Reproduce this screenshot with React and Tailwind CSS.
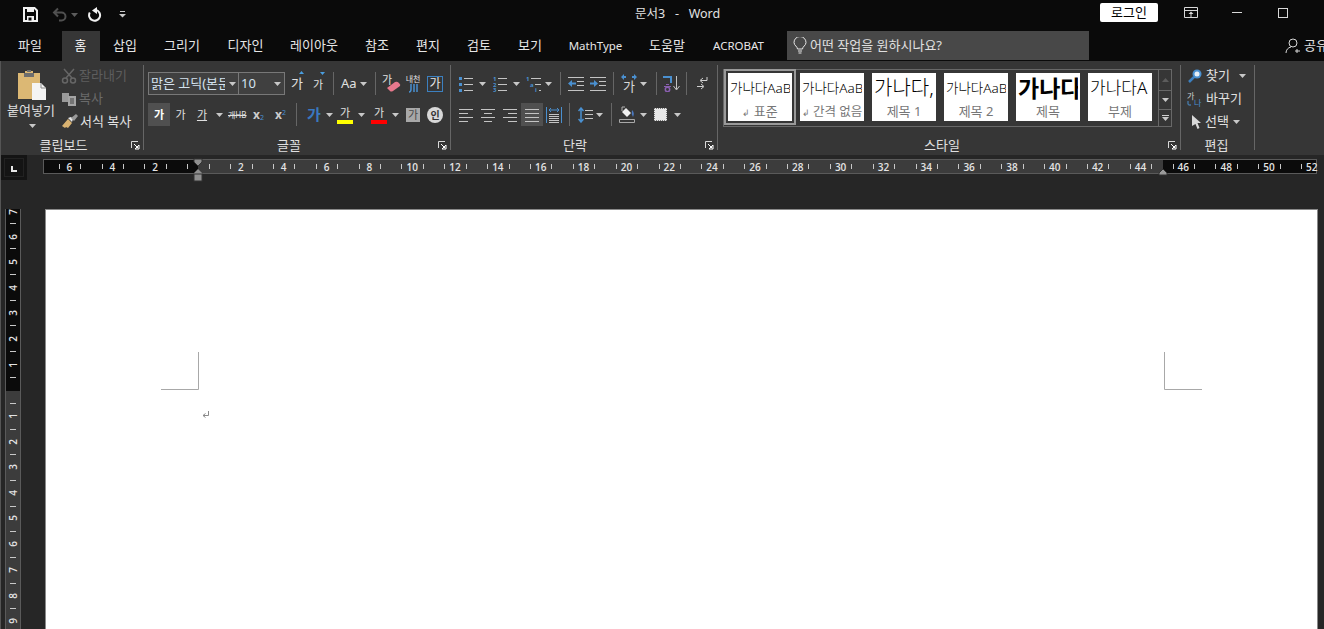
const Caret = ({ className = "", dim }) => (
  <svg width="7" height="4" viewBox="0 0 7 4" className={`shrink-0 ${className}`}>
    <path d="M0 0h7L3.5 4z" fill={dim ? "#5c5c5c" : "#c8c8c8"} />
  </svg>
);

const Sep = ({ className = "" }) => <div className={`w-px h-[23px] bg-[#666666] shrink-0 ${className}`} />;

const Launcher = () => (
  <svg width="9" height="9" viewBox="0 0 9 9" className="absolute right-[3px] bottom-[5px]">
    <path d="M0.5 7V0.5H7" fill="none" stroke="#d8d8d8" />
    <path d="M3 3l4 4M4 8h4V4z" fill="none" stroke="#ffffff" />
  </svg>
);

const Ga = ({ className = "" }) => <span className={`leading-none ${className}`}>가</span>;

const Lines = ({ rows, w = 14 }) => (
  <svg width={w} height="16" viewBox={`0 0 ${w} 16`} className="shrink-0">
    {rows.map((r, i) => (
      <path key={i} d={`M${r[0]} ${r[1]}.5H${r[2]}`} stroke="#c4c4c4" />
    ))}
  </svg>
);

const Tab = ({ children, className = "" }) => (
  <div className={`h-[30px] flex items-center justify-center text-[#e6e6e6] shrink-0 whitespace-nowrap ${className}`}>{children}</div>
);

const StyleCard = ({ preview, caption, className = "" }) => (
  <div className={`w-[64px] h-[48px] bg-white shrink-0 flex flex-col items-center ${className}`}>
    <div className="h-[30px] w-full px-[2px]">
      <div className="h-full w-full flex items-center overflow-hidden whitespace-nowrap text-black font-light">{preview}</div>
    </div>
    <div className="h-[18px] leading-[16px] text-[#777777] whitespace-nowrap">{caption}</div>
  </div>
);

function HRuler() {
  const nums = [];
  for (let n = -6; n <= 52; n += 2) {
    if (n !== 0) nums.push(n);
  }
  const ticks = [];
  for (let k = -7; k < 52; k++) ticks.push(155 + 21.42 * (k + 0.5));
  return (
    <svg width="1274" height="26" viewBox="0 0 1274 26" className="overflow-visible shrink-0">
      <rect x="0.5" y="0.5" width="1273" height="14" fill="#0b0b0b" stroke="#5a5a5a" />
      <rect x="155" y="1" width="965" height="13" fill="#3c3c3c" />
      {ticks.map((x, i) => (
        <path key={i} d={`M${Math.round(x)}.5 5v5`} stroke="#c8c8c8" />
      ))}
      {nums.map((n) => (
        <text key={n} x={155 + 21.42 * n} y="11.5" fontSize="10" fontWeight="600" fill="#e4e4e4" textAnchor="middle" fontFamily="'Open Sans', sans-serif">
          {Math.abs(n)}
        </text>
      ))}
      <path d="M151 0h8v3l-4 4-4-4z" fill="#8f8f8f" stroke="#333333" />
      <path d="M155 10l4 4v1h-8v-1z" fill="#8f8f8f" />
      <rect x="151" y="15" width="8" height="7" fill="#8f8f8f" stroke="#333333" />
      <path d="M1120 10l4 4v2h-8v-2z" fill="#9a9a9a" stroke="#333333" />
    </svg>
  );
}

function VRuler() {
  const nums = [
    [7, 212], [6, 237], [5, 262], [4, 288], [3, 313], [2, 339], [1, 365],
    [1, 416], [2, 442], [3, 467], [4, 493], [5, 518], [6, 544], [7, 570], [8, 596], [9, 621],
  ];
  const ticks = [223, 248, 274, 300, 325, 351, 377, 403, 429, 454, 480, 506, 531, 557, 583, 608];
  return (
    <svg width="16" height="421" viewBox="0 208 16 421" className="shrink-0">
      <rect x="0.5" y="208.5" width="15" height="422" fill="#0b0b0b" stroke="#5a5a5a" />
      <rect x="1" y="391" width="14" height="240" fill="#3c3c3c" />
      {ticks.map((y) => (
        <path key={y} d={`M5 ${y}.5h6`} stroke="#c8c8c8" />
      ))}
      {nums.map(([n, y], i) => (
        <text key={i} transform={`translate(11.5 ${y}) rotate(-90)`} fontSize="10" fontWeight="600" fill="#e4e4e4" textAnchor="middle" fontFamily="'Open Sans', sans-serif">
          {n}
        </text>
      ))}
    </svg>
  );
}

export default function App() {
  return (
    <div className="w-[1324px] h-[629px] overflow-hidden bg-[#262626] flex flex-col font-['Noto_Sans','Noto_Sans_CJK_KR',sans-serif]">
      {/* title bar */}
      <div className="h-[31px] bg-[#0a0a0a] flex items-center shrink-0 relative">
        <svg width="15" height="15" viewBox="0 0 15 15" className="ml-[23px] shrink-0 -mt-[3px]">
          <path d="M1 1h10.500L14 3.500V14H1z" fill="none" stroke="#f2f2f2" strokeWidth="2" />
          <path d="M4 1h7v4H4zM4 9h7v5H4z" fill="#f2f2f2" />
          <path d="M5.500 10.500h3v3h-3z" fill="#0a0a0a" />
        </svg>
        <svg width="15" height="15" viewBox="0 0 15 15" className="ml-[14px] shrink-0 -mt-[3px]">
          <path d="M6 1.500L2 5.500l4 4M2 5.500h7.500a4 4 0 0 1 0 8H7" fill="none" stroke="#505050" strokeWidth="2" />
        </svg>
        <Caret dim className="ml-[4px] -mt-[2px]" />
        <svg width="15" height="15" viewBox="0 0 15 15" className="ml-[9px] shrink-0 -mt-[3px]">
          <path d="M9 2.900A5.500 5.500 0 1 1 2.800 5.500" fill="none" stroke="#f2f2f2" strokeWidth="2" />
          <path d="M10 0v7L5 3.500z" fill="#f2f2f2" />
        </svg>
        <svg width="7" height="7" viewBox="0 0 7 7" className="ml-[17px] shrink-0 -mt-[3px]">
          <path d="M1 0.500h5" stroke="#c8c8c8" />
          <path d="M0 3h7L3.500 6.500z" fill="#c8c8c8" />
        </svg>
        <div className="absolute left-[635px] top-[5px] text-[12.500px] leading-[18px] text-[#e2e2e2] whitespace-pre">문서3   -   Word</div>
        <div className="ml-[974px] w-[58px] h-[19px] bg-white rounded-[2px] text-black text-[13px] flex items-center justify-center shrink-0 -mt-[6px]">로그인</div>
        <svg width="14" height="11" viewBox="0 0 14 11" className="ml-[26px] shrink-0 -mt-[6px]">
          <path d="M0.500 0.500h13v10H0.500zM0.500 3.500h13" fill="none" stroke="#d8d8d8" />
          <path d="M7 4.500L4.500 7H6.500v3h1V7h2z" fill="#d8d8d8" />
        </svg>
        <div className="ml-[34px] w-[10px] h-px bg-[#d8d8d8] shrink-0 -mt-[6px]" />
        <div className="ml-[36px] w-[10px] h-[10px] border border-[#d8d8d8] shrink-0 -mt-[6px]" />
      </div>

      {/* tabs */}
      <div className="h-[30px] bg-[#0a0a0a] flex shrink-0 text-[13px]">
        <Tab className="w-[62px] pr-[2px]">파일</Tab>
        <Tab className="w-[38px] bg-[#363636] text-white pr-px">홈</Tab>
        <Tab className="w-[50px]">삽입</Tab>
        <Tab className="w-[64px]">그리기</Tab>
        <Tab className="w-[63px]">디자인</Tab>
        <Tab className="w-[74px]">레이아웃</Tab>
        <Tab className="w-[52px]">참조</Tab>
        <Tab className="w-[50px]">편지</Tab>
        <Tab className="w-[52px]">검토</Tab>
        <Tab className="w-[50px]">보기</Tab>
        <Tab className="w-[81px] text-[11.500px]">MathType</Tab>
        <Tab className="w-[62px]">도움말</Tab>
        <Tab className="w-[81px] text-[11.500px]">ACROBAT</Tab>
        <div className="ml-[8px] w-[302px] h-[29px] bg-[#484848] flex items-center text-[#e0e0e0] shrink-0">
          <svg width="14" height="17" viewBox="0 0 14 17" className="ml-[6px] shrink-0">
            <path d="M4.500 12C4.500 9.500 1 8.500 1 5.500a6 6 0 0 1 12 0c0 3-3.500 4-3.500 6.500zM5 14h4M5.500 16h3" fill="none" stroke="#e8e8e8" />
          </svg>
          <span className="ml-[3px] whitespace-nowrap">어떤 작업을 원하시나요?</span>
        </div>
        <div className="ml-[196px] flex items-center text-[#e0e0e0] whitespace-nowrap shrink-0">
          <svg width="16" height="16" viewBox="0 0 16 16" className="shrink-0">
            <path d="M8 1a4 4 0 0 1 0 8 4 4 0 0 1 0-8zM1 15c0-3 2-5.500 5-6M12 11v4M10 13h5" fill="none" stroke="#d8d8d8" />
          </svg>
          <span className="ml-[3px]">공유</span>
        </div>
      </div>

      {/* ribbon */}
      <div className="h-[94px] bg-[#363636] flex shrink-0 border-l border-[#555555] text-[13px] text-[#e0e0e0]">
        {/* clipboard */}
        <div className="w-[142px] relative flex flex-col shrink-0">
          <div className="h-[75px] flex">
            <div className="w-[60px] flex flex-col items-center shrink-0">
              <svg width="28" height="30" viewBox="0 0 28 30" className="mt-[9px] shrink-0 ml-[2px]">
                <path d="M0 3h7V1h8v2h7v26H0z" fill="#dcb874" />
                <path d="M6 3h10v4H6zM9 0h4v2H9z" fill="#6e6e6e" />
                <path d="M14 13h9l5 5v12H14z" fill="#f4f4f4" />
                <path d="M23 13v5h5" fill="none" stroke="#8a8a8a" />
              </svg>
              <div className="mt-[2px] leading-[16px] whitespace-nowrap">붙여넣기</div>
              <Caret className="mt-[6px] ml-[2px]" />
            </div>
            <div className="flex flex-col pt-[3px]">
              <div className="h-[23px] flex items-center text-[#5e5e5e]">
                <svg width="16" height="16" viewBox="0 0 16 16" className="shrink-0">
                  <path d="M3 1l8 9M13 1L5 10" stroke="#666666" strokeWidth="1.500" />
                  <circle cx="4" cy="12.500" r="2.500" fill="none" stroke="#666666" strokeWidth="1.500" />
                  <circle cx="12" cy="12.500" r="2.500" fill="none" stroke="#666666" strokeWidth="1.500" />
                </svg>
                <span className="ml-[2px] whitespace-nowrap">잘라내기</span>
              </div>
              <div className="h-[23px] flex items-center text-[#6a6a6a]">
                <svg width="16" height="14" viewBox="0 0 16 14" className="shrink-0">
                  <path d="M1 1h7v9H1z" fill="#9a9a9a" />
                  <path d="M7 4h8v10H7z" fill="#a4a4a4" />
                  <path d="M9 7h4M9 9h4M9 11h4" stroke="#444444" />
                </svg>
                <span className="ml-[2px] whitespace-nowrap">복사</span>
              </div>
              <div className="h-[23px] flex items-center text-[#e4e4e4]">
                <svg width="17" height="15" viewBox="0 0 17 15" className="shrink-0">
                  <path d="M1 12l6-7 4 4-4 5-2-1-1 1z" fill="#d9b271" />
                  <path d="M7 4l3-1 2 2-1 3z" fill="#e8e8e8" />
                  <path d="M10 4l5-4 2 2-4 5z" fill="#9a9a9a" />
                </svg>
                <span className="ml-[2px] whitespace-nowrap">서식 복사</span>
              </div>
            </div>
          </div>
          <div className="text-center leading-[16px] pr-[17px] pt-px">클립보드</div>
          <Launcher />
        </div>
        <div className="w-px h-[85px] mt-[4px] bg-[#666666] shrink-0" />

        {/* font */}
        <div className="w-[306px] relative flex flex-col shrink-0">
          <div className="h-[75px] pl-[4px] pt-[11px] flex flex-col gap-[8px]">
            <div className="h-[23px] flex items-center">
              <div className="w-[137px] h-[23px] flex border border-[#787878] bg-[#404040] shrink-0">
                <div className="w-[90px] flex items-center border-r border-[#787878] pl-[2px] overflow-hidden shrink-0">
                  <span className="w-[74px] overflow-hidden whitespace-nowrap text-[#d4e2ee]">맑은 고딕(본문</span>
                  <Caret className="ml-[4px]" />
                </div>
                <div className="flex items-center pl-[2px] text-[#d4e2ee]">
                  <span className="w-[33px]">10</span>
                  <Caret />
                </div>
              </div>
              <div className="w-[14px] ml-[5px] relative text-center text-[13px] shrink-0">
                <Ga />
                <svg width="5" height="3" viewBox="0 0 5 3" className="absolute right-0 -top-[3px]"><path d="M0 3h5L2.500 0z" fill="#4a9ee0" /></svg>
              </div>
              <div className="w-[14px] ml-[7px] relative text-center text-[11px] shrink-0 mt-[3px]">
                <Ga />
                <svg width="5" height="3" viewBox="0 0 5 3" className="absolute right-0 -top-[5px]"><path d="M0 0h5L2.500 3z" fill="#4a9ee0" /></svg>
              </div>
              <Sep className="ml-[8px]" />
              <span className="w-[16px] ml-[7px] text-[13px] leading-none shrink-0">Aa</span>
              <Caret className="ml-[3px]" />
              <Sep className="ml-[8px]" />
              <div className="w-[18px] ml-[6px] h-[18px] relative shrink-0 text-[11px]">
                <span className="absolute left-0 -top-[3px]">가</span>
                <svg width="14" height="11" viewBox="0 0 14 11" className="absolute left-[5px] top-[6px]"><path d="M0 7l8-6q2-1 4 1t1 3l-7 5q-2 1-3 0z" fill="#e8788c" /></svg>
              </div>
              <div className="w-[16px] ml-[5px] flex flex-col items-center shrink-0">
                <span className="text-[8px] leading-[10px] whitespace-nowrap">내천</span>
                <svg width="10" height="9" viewBox="0 0 10 9"><path d="M1 8q2 0 2-3V0M6 0v8M9 0v8" fill="none" stroke="#4a90d0" strokeWidth="1.500" /></svg>
              </div>
              <div className="w-[16px] h-[16px] ml-[6px] border border-[#3c80c0] flex items-center justify-center text-[12px] text-[#e8e8e8] shrink-0">
                <Ga />
              </div>
            </div>

            <div className="h-[23px] flex items-center">
              <div className="w-[22px] h-[23px] bg-[#505050] flex items-center justify-center text-[11px] font-bold text-white shrink-0"><Ga /></div>
              <div className="w-[21px] flex justify-center text-[11px] shrink-0"><Ga /></div>
              <div className="w-[22px] flex justify-center text-[11px] underline shrink-0"><Ga /></div>
              <Caret className="ml-[3px]" />
              <span className="w-[17px] ml-[5px] text-[8px] leading-none line-through whitespace-nowrap shrink-0">개HB</span>
              <div className="w-[12px] ml-[8px] font-bold text-[12px] leading-none text-[#cccccc] shrink-0">x<sub className="text-[7px] text-[#4a90d0] font-normal">2</sub></div>
              <div className="w-[13px] ml-[10px] font-bold text-[12px] leading-none text-[#cccccc] shrink-0">x<sup className="text-[7px] text-[#4a90d0] font-normal">2</sup></div>
              <Sep className="ml-[8px]" />
              <div className="w-[18px] ml-[8px] text-center text-[15px] font-bold text-[#3a78c0] shrink-0"><Ga /></div>
              <Caret className="ml-[3px]" />
              <div className="w-[16px] ml-[4px] flex flex-col items-center shrink-0">
                <span className="text-[11px] leading-[14px]">가</span>
                <div className="w-[16px] h-[4px] bg-[#ffff00]" />
              </div>
              <Caret className="ml-[5px]" />
              <div className="w-[16px] ml-[6px] flex flex-col items-center shrink-0">
                <span className="text-[11px] leading-[14px]">가</span>
                <div className="w-[16px] h-[4px] bg-[#ff0000]" />
              </div>
              <Caret className="ml-[5px]" />
              <div className="w-[14px] h-[14px] ml-[7px] bg-[#a8a8a8] text-[#4a4a4a] text-[11px] flex items-center justify-center shrink-0"><Ga /></div>
              <div className="w-[16px] h-[16px] ml-[7px] rounded-full bg-[#d8d8d8] text-[#333333] text-[10px] font-bold flex items-center justify-center shrink-0"><span className="leading-none">인</span></div>
            </div>
          </div>
          <div className="text-center leading-[16px] -ml-[16px] pt-px">글꼴</div>
          <Launcher />
        </div>
        <div className="w-px h-[85px] mt-[4px] bg-[#666666] shrink-0" />

        {/* paragraph */}
        <div className="w-[266px] relative flex flex-col shrink-0">
          <div className="h-[75px] pl-[8px] pt-[11px] flex flex-col gap-[8px]">
            <div className="h-[23px] flex items-center">
              <svg width="15" height="16" viewBox="0 0 15 16" className="shrink-0">
                <path d="M5 2.500h9M5 8.500h9M5 14.500h9" stroke="#c4c4c4" />
                <path d="M0 1h3v3H0zM0 7h3v3H0zM0 13h3v3H0z" fill="#4a90d0" />
              </svg>
              <Caret className="ml-[5px]" />
              <svg width="14" height="16" viewBox="0 0 14 16" className="ml-[7px] shrink-0">
                <path d="M5 2.500h9M5 8.500h9M5 14.500h9" stroke="#c4c4c4" />
                <text x="0" y="5" fontSize="6" fontWeight="700" fill="#4a90d0">1</text>
                <text x="0" y="11" fontSize="6" fontWeight="700" fill="#4a90d0">2</text>
                <text x="0" y="16" fontSize="6" fontWeight="700" fill="#4a90d0">3</text>
              </svg>
              <Caret className="ml-[6px]" />
              <svg width="15" height="16" viewBox="0 0 15 16" className="ml-[6px] shrink-0">
                <path d="M5 2.500h10M9 8.500h6M13 14.500h2" stroke="#c4c4c4" />
                <text x="0" y="5" fontSize="6" fontWeight="700" fill="#4a90d0">1</text>
                <text x="4" y="11" fontSize="6" fontWeight="700" fill="#4a90d0">a</text>
                <text x="9" y="16" fontSize="6" fontWeight="700" fill="#4a90d0">i</text>
              </svg>
              <Caret className="ml-[4px]" />
              <Sep className="ml-[8px]" />
              <svg width="16" height="14" viewBox="0 0 16 14" className="ml-[7px] shrink-0">
                <path d="M0 0.500h16M9 4.500h7M9 8.500h7M0 13.500h16" stroke="#c4c4c4" />
                <path d="M0 6.500L4 3v2.500h4v2H4V10z" fill="#4a90d0" />
              </svg>
              <svg width="16" height="14" viewBox="0 0 16 14" className="ml-[6px] shrink-0">
                <path d="M0 0.500h16M9 4.500h7M9 8.500h7M0 13.500h16" stroke="#c4c4c4" />
                <path d="M8 6.500L4 3v2.500H0v2h4V10z" fill="#4a90d0" />
              </svg>
              <Sep className="ml-[7px]" />
              <div className="w-[16px] ml-[7px] flex flex-col items-center shrink-0">
                <svg width="16" height="6" viewBox="0 0 16 6"><path d="M0 3l3-3v2h2v2H3v2zM16 3l-3-3v2h-2v2h2v2z" fill="#4a90d0" /></svg>
                <span className="text-[13px] leading-[13px] text-[#d8d8d8]">가</span>
              </div>
              <Caret className="ml-[3px]" />
              <Sep className="ml-[9px]" />
              <div className="w-[17px] ml-[6px] flex items-center shrink-0">
                <svg width="9" height="16" viewBox="0 0 9 16" className="shrink-0">
                  <path d="M0 1h8v6" fill="none" stroke="#4a90d0" strokeWidth="2" />
                  <path d="M3 8.500h3M1 10.500h7" stroke="#8a5fb0" />
                  <circle cx="4.500" cy="13.500" r="2.200" fill="none" stroke="#8a5fb0" strokeWidth="1.500" />
                </svg>
                <svg width="7" height="15" viewBox="0 0 7 15" className="ml-auto"><path d="M3.500 0v13M0.500 10l3 4 3-4" fill="none" stroke="#c4c4c4" /></svg>
              </div>
              <Sep className="ml-[6px]" />
              <svg width="11" height="14" viewBox="0 0 11 14" className="ml-[10px] shrink-0">
                <path d="M10 0v3.500H4M6 1L3 3.500 6 6M0 9.500h6M4 7l3 2.500L4 12" fill="none" stroke="#d0d0d0" />
              </svg>
            </div>

            <div className="h-[23px] flex items-center">
              <Lines rows={[[0, 2, 14], [0, 6, 9], [0, 10, 14], [0, 14, 9]]} />
              <div className="ml-[8px] flex"><Lines rows={[[0, 2, 14], [3, 6, 11], [0, 10, 14], [3, 14, 11]]} /></div>
              <div className="ml-[8px] flex"><Lines rows={[[0, 2, 14], [5, 6, 14], [0, 10, 14], [5, 14, 14]]} /></div>
              <div className="w-[22px] h-[23px] ml-[4px] bg-[#505050] flex items-center justify-center shrink-0">
                <Lines rows={[[0, 2, 14], [0, 6, 14], [0, 10, 14], [0, 14, 14]]} />
              </div>
              <svg width="16" height="16" viewBox="0 0 16 16" className="ml-[3px] shrink-0">
                <path d="M0.500 0v16M15.500 0v16" stroke="#4a90d0" />
                <path d="M3 3h10M3 3l2-2M3 3l2 2M13 3l-2-2M13 3l-2 2" fill="none" stroke="#4a90d0" />
                <path d="M3 7.500h10M3 9.500h10M3 11.500h10M3 13.500h10M3 15.500h10" stroke="#c4c4c4" />
              </svg>
              <Sep className="ml-[7px]" />
              <svg width="15" height="16" viewBox="0 0 15 16" className="ml-[8px] shrink-0">
                <path d="M3 1v14M0.500 4L3 1l2.500 3M0.500 12L3 15l2.500-3" fill="none" stroke="#4a90d0" strokeWidth="1.500" />
                <path d="M7 3.500h8M7 7.500h8M7 11.500h8" stroke="#c4c4c4" />
              </svg>
              <Caret className="ml-[3px]" />
              <Sep className="ml-[8px]" />
              <svg width="16" height="17" viewBox="0 0 16 17" className="ml-[7px] shrink-0">
                <path d="M7 2l5 5-4 4-5-5z" fill="#f0f0f0" />
                <path d="M3 5V1h3" fill="none" stroke="#b0b0b0" />
                <path d="M13 4q3 3 1 7-2-3-1-7z" fill="#4a78c0" />
                <path d="M0.500 13.500h15v3H0.500z" fill="none" stroke="#a8a8a8" />
              </svg>
              <Caret className="ml-[5px]" />
              <div className="w-[13px] h-[13px] ml-[7px] bg-[#e8e8e8] border border-dotted border-[#777777] shrink-0" />
              <Caret className="ml-[7px]" />
            </div>
          </div>
          <div className="text-center leading-[16px] -ml-[18px] pt-px">단락</div>
          <Launcher />
        </div>
        <div className="w-px h-[85px] mt-[4px] bg-[#666666] shrink-0" />

        {/* styles */}
        <div className="w-[462px] relative flex flex-col shrink-0">
          <div className="h-[75px] pl-[5px] pt-[8px]">
            <div className="w-[449px] h-[58px] flex border border-[#686868]">
              <div className="w-[434px] flex gap-[8px] pl-[4px] pt-[3px] shrink-0">
                <StyleCard className="outline-2 outline-offset-2 outline-[#9a9a9a]" preview={<span className="text-[13.500px]">가나다AaBbCc</span>} caption={<span><span className="text-[9px]">↲</span> 표준</span>} />
                <StyleCard preview={<span className="text-[13.500px]">가나다AaBbCc</span>} caption={<span className="text-[12.500px]"><span className="text-[9px]">↲</span> 간격 없음</span>} />
                <StyleCard preview={<span className="text-[20px]">가나다,</span>} caption="제목 1" />
                <StyleCard preview={<span className="text-[13.500px]">가나다AaBbCc</span>} caption="제목 2" />
                <StyleCard preview={<span className="text-[23px] font-bold">가나다</span>} caption="제목" />
                <StyleCard preview={<span className="text-[17px]">가나다A</span>} caption="부제" />
              </div>
              <div className="w-[14px] flex flex-col border-l border-[#686868] shrink-0">
                <div className="h-[21px] flex items-center justify-center border-b border-[#686868]">
                  <svg width="7" height="4" viewBox="0 0 7 4"><path d="M0 4h7L3.500 0z" fill="#5c5c5c" /></svg>
                </div>
                <div className="h-[19px] flex items-center justify-center border-b border-[#686868]"><Caret /></div>
                <div className="flex-1 flex flex-col items-center justify-center gap-px">
                  <div className="w-[7px] h-px bg-[#d0d0d0]" />
                  <Caret />
                </div>
              </div>
            </div>
          </div>
          <div className="text-center leading-[16px] -ml-[14px] pt-px">스타일</div>
          <Launcher />
        </div>
        <div className="w-px h-[85px] mt-[4px] bg-[#666666] shrink-0" />

        {/* editing */}
        <div className="w-[73px] flex flex-col shrink-0">
          <div className="h-[75px] pt-[3px] flex flex-col">
            <div className="h-[23px] flex items-center pl-[7px]">
              <svg width="14" height="14" viewBox="0 0 14 14" className="shrink-0">
                <path d="M1 13l5-5" stroke="#3c80c0" strokeWidth="2.500" />
                <circle cx="9" cy="5" r="4.500" fill="#4a90d0" />
                <circle cx="9" cy="5" r="2.500" fill="#e8f0f8" />
              </svg>
              <span className="ml-[4px] w-[26px] whitespace-nowrap">찾기</span>
              <Caret className="ml-[7px]" />
            </div>
            <div className="h-[23px] flex items-center pl-[6px]">
              <svg width="15" height="16" viewBox="0 0 15 16" className="shrink-0">
                <text x="0" y="8" fontSize="8" fill="#d0d0d0">가</text>
                <text x="7" y="15" fontSize="8" fill="#4a90d0">나</text>
                <path d="M1 10v3q0 1 1 1h2" fill="none" stroke="#4a90d0" />
              </svg>
              <span className="ml-[4px] whitespace-nowrap">바꾸기</span>
            </div>
            <div className="h-[23px] flex items-center pl-[11px]">
              <svg width="9" height="14" viewBox="0 0 9 14" className="shrink-0">
                <path d="M0 0l9 8H5.500l2 5-2 1-2-5L0 11z" fill="#d8d8d8" />
              </svg>
              <span className="ml-[4px] w-[26px] whitespace-nowrap">선택</span>
              <Caret className="ml-[2px]" />
            </div>
          </div>
          <div className="text-center leading-[16px] -ml-[2px] pt-px">편집</div>
        </div>
        <div className="w-px h-[85px] mt-[4px] bg-[#666666] shrink-0" />
      </div>

      {/* horizontal ruler row */}
      <div className="h-[54px] flex shrink-0 border-l border-[#555555]">
        <div className="w-[26px] h-[25px] bg-[#141414] p-[3px] shrink-0">
          <div className="w-full h-full border border-[#222222] flex items-center justify-center pt-[3px]">
            <div className="w-[6px] h-[6px] border-l-2 border-b-2 border-[#e8e8e8]" />
          </div>
        </div>
        <div className="ml-[16px] mt-[4px]"><HRuler /></div>
      </div>

      {/* document */}
      <div className="flex-1 flex border-l border-[#555555] overflow-hidden">
        <div className="ml-[4px] -mt-px"><VRuler /></div>
        <div className="ml-[24px] w-[1273px] h-[430px] bg-white border border-[#8a8a8a] relative shrink-0">
          <svg width="1273" height="215" viewBox="45 209 1273 215" className="absolute -left-px -top-px">
            <path d="M198.500 352v37.500H161M1164.500 352v37.500H1202" fill="none" stroke="#a8a8a8" />
            <path d="M208.500 411v4.500H203M205.500 413.500l-2.500 2 2.500 2" fill="none" stroke="#8a8a8a" />
          </svg>
        </div>
      </div>
    </div>
  );
}
